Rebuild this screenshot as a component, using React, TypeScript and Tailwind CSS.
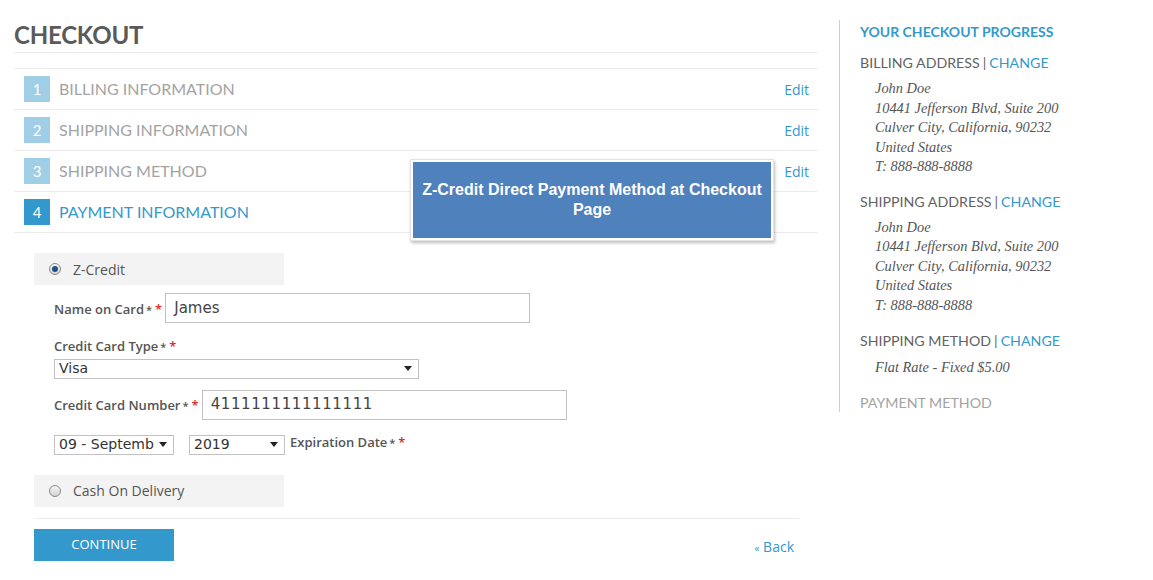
import React from 'react';

const steps = [
  { n: 1, title: 'BILLING INFORMATION', edit: true },
  { n: 2, title: 'SHIPPING INFORMATION', edit: true },
  { n: 3, title: 'SHIPPING METHOD', edit: true },
  { n: 4, title: 'PAYMENT INFORMATION', edit: false, active: true },
];

const address = [
  'John Doe',
  '10441 Jefferson Blvd, Suite 200',
  'Culver City, California, 90232',
  'United States',
  'T: 888-888-8888',
];

const head = { fontFamily: 'Lato, "Open Sans", sans-serif' };
const body = { fontFamily: '"Open Sans", "Liberation Sans", sans-serif' };
const serif = { fontFamily: '"Liberation Serif", "DejaVu Serif", serif' };
const field = { fontFamily: '"DejaVu Sans", Verdana, sans-serif' };

function Caret() {
  return <span className="ml-auto h-0 w-0 border-x-[4px] border-t-[5px] border-x-transparent border-t-[#222]" />;
}

function Radio({ checked }: { checked?: boolean }) {
  return (
    <span className="flex h-[12px] w-[12px] items-center justify-center rounded-full border border-[#8a8a8a] bg-gradient-to-b from-[#f4f4f4] to-[#d4d4d4]">
      {checked && <span className="h-[6px] w-[6px] rounded-full bg-[#1d4f86]" />}
    </span>
  );
}

function Req() {
  return (
    <span className="ml-[2px] text-[#555]">
      <span className="text-[11px]">*</span>
      <span className="ml-[3px] text-[#e02b27]">*</span>
    </span>
  );
}

function SideHeading({ label, muted }: { label: string; muted?: boolean }) {
  return (
    <div className={`text-[14.2px] leading-[20px] ${muted ? 'text-[#a3a3a3]' : 'text-[#636363]'}`} style={head}>
      {label}
      {!muted && (
        <>
          <span className="mx-[3px]">|</span>
          <span className="text-[#3399cc]">CHANGE</span>
        </>
      )}
    </div>
  );
}

function Address({ lines }: { lines: string[] }) {
  return (
    <div className="mt-[6px] pl-[15px] text-[14.4px] italic leading-[19.5px] text-[#555]" style={serif}>
      {lines.map((l) => (
        <div key={l}>{l}</div>
      ))}
    </div>
  );
}

export default function App() {
  return (
    <div className="flex w-[1153px] bg-white text-[#636363]">
      {/* Main column */}
      <div className="w-[818px] shrink-0 pl-[14px] pt-[20px]">
        <h1 className="text-[24px] font-bold leading-[30px] tracking-[-0.2px] text-[#5a5a5a]" style={head}>
          CHECKOUT
        </h1>
        <div className="mt-[2px] h-[16px] border-t border-[#ececec]" />

        <div className="relative">
          {steps.map((s) => (
            <div key={s.n} className="flex h-[41px] items-center border-t border-[#ececec] pl-[10px] pr-[9px]">
              <span
                className={`flex h-[26px] w-[26px] items-center justify-center text-[15px] text-white ${
                  s.active ? 'bg-[#3399cc]' : 'bg-[#9fcee6]'
                }`}
                style={head}
              >
                {s.n}
              </span>
              <span
                className={`ml-[9px] text-[16px] ${s.active ? 'text-[#3399cc]' : 'text-[#a3a3a3]'}`}
                style={head}
              >
                {s.title}
              </span>
              {s.edit && (
                <span className="ml-auto text-[14px] text-[#3399cc]" style={body}>
                  Edit
                </span>
              )}
            </div>
          ))}
          <div className="border-t border-[#ececec]" />

          {/* Tooltip overlay */}
          <div className="absolute left-[396px] top-[91px] border border-[#e2e2e2] bg-white p-[2px] shadow-[1px_2px_3px_rgba(0,0,0,0.25)]">
            <div
              className="flex h-[76px] w-[358px] flex-col items-center justify-center bg-[#4f81bd] text-center text-[16px] font-bold leading-[20px] text-white"
              style={{ fontFamily: '"Liberation Sans", Arial, sans-serif' }}
            >
              <span>Z-Credit Direct Payment Method at Checkout</span>
              <span>Page</span>
            </div>
          </div>
        </div>

        {/* Payment methods */}
        <div className="pl-[20px] pr-[19px] pt-[20px]" style={body}>
          <div className="flex h-[32px] w-[250px] items-center bg-[#f3f3f3] pl-[15px]">
            <Radio checked />
            <span className="ml-[12px] text-[14px] text-[#555]">Z-Credit</span>
          </div>

          <div className="pl-[20px] text-[13px] font-semibold text-[#555]">
            <div className="mt-[8px] flex items-center">
              <span className="mt-[3px]">Name on Card</span>
              <span className="mt-[3px]">
                <Req />
              </span>
              <div className="ml-[3px] flex h-[30px] w-[365px] items-center border border-[#c2c2c2] px-[8px] text-[15px] font-normal text-[#444]" style={field}>
                James
              </div>
            </div>

            <div className="mt-[14px]">
              Credit Card Type
              <Req />
            </div>
            <div className="mt-[2px] flex h-[20px] w-[365px] items-center border border-[#c2c2c2] pl-[4px] pr-[6px] text-[14px] font-normal text-[#333]" style={field}>
              Visa
              <Caret />
            </div>

            <div className="mt-[11px] flex items-center">
              <span className="mt-[3px]">Credit Card Number</span>
              <span className="mt-[3px]">
                <Req />
              </span>
              <div className="ml-[3px] flex h-[30px] w-[365px] items-center border border-[#c2c2c2] px-[8px] text-[15px] font-normal tracking-[0.6px] text-[#444]" style={field}>
                4111111111111111
              </div>
            </div>

            <div className="mt-[15px] flex items-start">
              <div className="flex h-[20px] w-[120px] items-center overflow-hidden border border-[#c2c2c2] pl-[4px] pr-[6px] text-[14px] font-normal text-[#333]" style={field}>
                <span className="whitespace-nowrap">09 - Septemb</span>
                <Caret />
              </div>
              <div className="ml-[15px] flex h-[20px] w-[96px] items-center border border-[#c2c2c2] pl-[4px] pr-[6px] text-[14px] font-normal text-[#333]" style={field}>
                2019
                <Caret />
              </div>
              <span className="ml-[5px] -mt-[2px]">Expiration Date</span>
              <span className="-mt-[2px]">
                <Req />
              </span>
            </div>
          </div>

          <div className="mt-[20px] flex h-[32px] w-[250px] items-center bg-[#f3f3f3] pl-[15px]">
            <Radio />
            <span className="ml-[12px] text-[14px] text-[#555]">Cash On Delivery</span>
          </div>

          <div className="mt-[11px] border-t border-[#ececec]" />

          <div className="mt-[10px] flex items-center justify-between">
            <button className="flex h-[32px] w-[140px] items-center justify-center bg-[#3399cc] text-[13px] text-white">
              CONTINUE
            </button>
            <span className="mt-[3px] pr-[5px] text-[14px] text-[#3399cc]">
              <span className="text-[10px]">«</span> Back
            </span>
          </div>
        </div>
      </div>

      {/* Sidebar */}
      <div className="ml-[21px] mt-[20px] h-[392px] border-l border-[#cfcfcf] pl-[20px] pt-[2px]">
        <div className="text-[14px] font-bold leading-[20px] text-[#3399cc]" style={head}>
          YOUR CHECKOUT PROGRESS
        </div>

        <div className="mt-[11px]">
          <SideHeading label="BILLING ADDRESS" />
          <Address lines={address} />
        </div>

        <div className="mt-[15px]">
          <SideHeading label="SHIPPING ADDRESS" />
          <Address lines={address} />
        </div>

        <div className="mt-[16px]">
          <SideHeading label="SHIPPING METHOD" />
          <div className="mt-[7px] pl-[15px] text-[14.4px] italic leading-[19.5px] text-[#555]" style={serif}>
            Flat Rate - Fixed $5.00
          </div>
        </div>

        <div className="mt-[15px]">
          <SideHeading label="PAYMENT METHOD" muted />
        </div>
      </div>
    </div>
  );
}
